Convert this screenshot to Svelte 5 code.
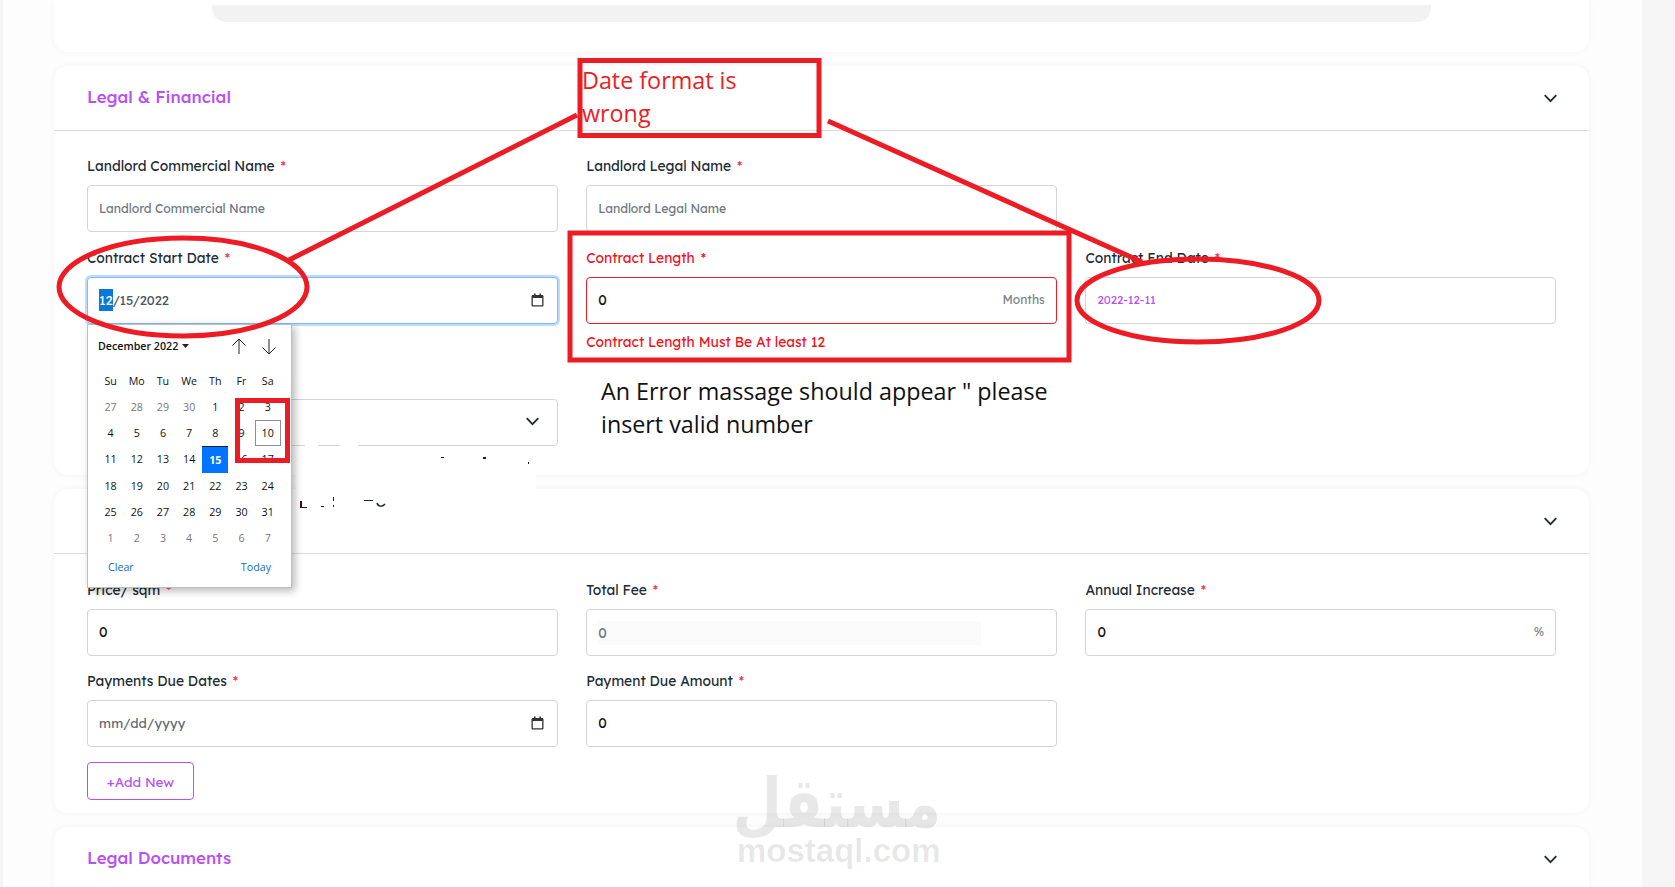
<script lang="ts">
	// Calendar grid for the open date picker (December 2022, Sunday first)
	const weekdays = ['Su', 'Mo', 'Tu', 'We', 'Th', 'Fr', 'Sa'];
	const days = [
		...[27, 28, 29, 30].map((d) => ({ d, muted: true })),
		...Array.from({ length: 31 }, (_, i) => ({ d: i + 1, muted: false })),
		...[1, 2, 3, 4, 5, 6, 7].map((d) => ({ d, muted: true }))
	];

	// Leftovers of the erased text in the reference
	const specks = [
		{ x: 441, y: 457, w: 3, h: 1 },
		{ x: 483, y: 457, w: 3, h: 2 },
		{ x: 528, y: 462, w: 1, h: 2 },
		{ x: 300, y: 501, w: 2, h: 7 },
		{ x: 300, y: 507, w: 7, h: 1 },
		{ x: 321, y: 506, w: 3, h: 1 },
		{ x: 333, y: 497, w: 1, h: 4 },
		{ x: 333, y: 505, w: 1, h: 2 },
		{ x: 364, y: 500, w: 9, h: 1 }
	];
	// Gaps the same paint left in the select's bottom border
	const gaps = [
		{ x: 305, w: 13 },
		{ x: 340, w: 18 }
	];
</script>

{#snippet chevron()}
	<svg class="chevron" width="13" height="9" viewBox="0 0 13 9"><path d="M.7 1.200 6.500 7.200 12.300 1.200" /></svg>
{/snippet}

{#snippet calIcon()}
	<svg class="cal-icon" width="13" height="14" viewBox="0 0 13 14">
		<path d="M3 0.5h1.6v1.5H8.4V0.5H10V2h1.2c.7 0 1.3.6 1.3 1.3v8.9c0 .7-.6 1.3-1.3 1.3H1.8c-.7 0-1.3-.6-1.3-1.3V3.3C.5 2.600 1.100 2 1.800 2H3Zm-1.200 4.600v7.100h9.400V5.100Z" />
	</svg>
{/snippet}

{#snippet req(text)}
	<label class="lbl">{text} <span class="star">*</span></label>
{/snippet}

<div class="page">
	<div class="gutter-l"></div>
	<main class="main">
		<section class="card stub"><div class="stub-bar"></div></section>

		<section class="card">
			<header class="card-head">
				<h2>Legal &amp; Financial</h2>
				{@render chevron()}
			</header>
			<div class="grid first">
				<div class="field">
					{@render req('Landlord Commercial Name')}
					<input class="inp" placeholder="Landlord Commercial Name" />
				</div>
				<div class="field">
					{@render req('Landlord Legal Name')}
					<input class="inp" placeholder="Landlord Legal Name" />
				</div>
				<div></div>

				<div class="field">
					{@render req('Contract Start Date')}
					<div class="inp date focus">
						<span><span class="sel">12</span>/15/2022</span>
						{@render calIcon()}
					</div>
				</div>
				<div class="field err">
					{@render req('Contract Length')}
					<div class="inp suffix">
						<span class="val">0</span>
						<span class="unit">Months</span>
					</div>
					<p class="err-msg">Contract Length Must Be At least 12</p>
				</div>
				<div class="field">
					{@render req('Contract End Date')}
					<div class="inp"><span class="purple">2022-12-11</span></div>
				</div>

				<div class="field">
					<label class="lbl">&nbsp;</label>
					<div class="inp suffix select">
						<span></span>
						{@render chevron()}
					</div>
				</div>
			</div>
		</section>

		<section class="card">
			<header class="card-head">
				<h2>&nbsp;</h2>
				{@render chevron()}
			</header>
			<div class="grid second">
				<div class="field">
					{@render req('Price/ sqm')}
					<div class="inp"><span class="val">0</span></div>
				</div>
				<div class="field">
					{@render req('Total Fee')}
					<div class="inp disabled"><span class="shade"><span class="val grey">0</span></span></div>
				</div>
				<div class="field">
					{@render req('Annual Increase')}
					<div class="inp suffix">
						<span class="val">0</span>
						<span class="unit">%</span>
					</div>
				</div>

				<div class="field">
					{@render req('Payments Due Dates')}
					<div class="inp date">
						<span class="ph">mm/dd/yyyy</span>
						{@render calIcon()}
					</div>
				</div>
				<div class="field">
					{@render req('Payment Due Amount')}
					<div class="inp"><span class="val">0</span></div>
				</div>
			</div>
			<button class="add">+Add New</button>
		</section>

		<section class="card last">
			<header class="card-head flat">
				<h2>Legal Documents</h2>
				{@render chevron()}
			</header>
		</section>
	</main>
	<div class="gutter-r"></div>

	<!-- white patch where the screenshot text was painted over -->
	<div class="patch"></div>
	{#each gaps as g}
		<i class="gap" style="left:{g.x}px;width:{g.w}px"></i>
	{/each}
	{#each specks as s}
		<i class="speck" style="left:{s.x}px;top:{s.y}px;width:{s.w}px;height:{s.h}px"></i>
	{/each}
	<svg class="smile" width="10" height="6" viewBox="0 0 10 6"><path d="M1 1c1 4 6 4 8 1" /></svg>

	<div class="picker">
		<div class="picker-top">
			<span class="month">December 2022 <svg width="7" height="4" viewBox="0 0 7 4"><path d="M0 0h7L3.500 4Z" /></svg></span>
			<span class="arrows">
				<svg width="16" height="17" viewBox="0 0 16 17"><path d="M8 16V1M1.500 7.500 8 1l6.500 6.500" /></svg>
				<svg width="16" height="17" viewBox="0 0 16 17"><path d="M8 1v15M1.500 9.500 8 16l6.500-6.500" /></svg>
			</span>
		</div>
		<div class="cal">
			{#each weekdays as w}
				<span class="wd">{w}</span>
			{/each}
			{#each days as day}
				<span
					class="day"
					class:muted={day.muted}
					class:picked={!day.muted && day.d === 15}
					class:today={!day.muted && day.d === 10}>{day.d}</span
				>
			{/each}
		</div>
		<div class="picker-foot">
			<span>Clear</span>
			<span>Today</span>
		</div>
	</div>

	<div class="mark">
		<div class="mark-ar" dir="rtl">مستقل</div>
		<div class="mark-en">mostaql.com</div>
	</div>

	<!-- review annotations drawn on top of the screenshot -->
	<svg class="notes" width="1675" height="887" viewBox="0 0 1675 887">
		<line x1="577" y1="115" x2="289" y2="260" />
		<line x1="828" y1="121" x2="1142" y2="262" />
		<rect x="580" y="60.500" width="239" height="75" />
		<rect x="570" y="233" width="499" height="127" />
		<rect x="237.500" y="400.500" width="50" height="60" />
		<ellipse cx="183" cy="287" rx="124" ry="49" />
		<ellipse cx="1198" cy="300.500" rx="121" ry="41.500" />
		<text class="t-red" x="582" y="89">Date format is</text>
		<text class="t-red" x="582" y="122">wrong</text>
		<text class="t-black" x="601" y="400">An Error massage should appear " please</text>
		<text class="t-black" x="601" y="433">insert valid number</text>
	</svg>
</div>

<style>
	:global(body) {
		margin: 0;
		background: #fff;
	}
	.page {
		position: relative;
		display: flex;
		width: 1675px;
		height: 887px;
		overflow: hidden;
		font-family: 'Lexend', 'Inter', 'Noto Sans', sans-serif;
		color: #212b36;
		background: #fff;
	}
	.gutter-l {
		width: 3px;
		background: #f5f5f5;
		flex: none;
	}
	.gutter-r {
		width: 34px;
		background: #f5f5f5;
		flex: none;
	}
	.main {
		flex: 1;
		padding: 0 53px 0 51px;
		display: flex;
		flex-direction: column;
		gap: 14px;
		background: #fdfdfd;
	}
	.card {
		flex: none;
		background: #fff;
		border-radius: 14px;
		box-shadow: 0 0 6px rgba(0, 0, 0, 0.05);
	}
	.stub {
		height: 52px;
		padding: 5px 158px 0;
		box-sizing: border-box;
		border-radius: 0 0 14px 14px;
	}
	.stub-bar {
		height: 17px;
		width: 1219px;
		background: #f2f2f2;
		border-radius: 0 0 14px 14px;
	}
	.card-head {
		height: 65px;
		box-sizing: border-box;
		padding: 0 32px 0 33px;
		display: flex;
		align-items: center;
		justify-content: space-between;
		border-bottom: 1px solid #dcdcdc;
		border-radius: 14px 14px 0 0;
	}
	.card-head.flat {
		border-bottom: 0;
	}
	h2 {
		margin: -4px 0 0;
		font-size: 16.800px;
		font-weight: 500;
		color: #b94ff7;
	}
	.chevron {
		fill: none;
		stroke: #212b36;
		stroke-width: 1.800;
	}
	.grid {
		display: grid;
		grid-template-columns: repeat(3, 470.700px);
		column-gap: 28.500px;
		row-gap: 17px;
		padding: 26px 33px 29px;
	}
	.grid.second {
		row-gap: 16px;
		padding: 27px 33px 15px;
	}
	.lbl {
		display: block;
		font-size: 13.800px;
		font-weight: 400;
		line-height: 19px;
		margin-top: -1px;
		margin-bottom: 10px;
		color: #212b36;
	}
	.star {
		color: #f5334f;
		margin-left: 2px;
	}
	.inp {
		display: flex;
		align-items: center;
		width: 100%;
		height: 47px;
		box-sizing: border-box;
		padding: 0 11px 2px;
		border: 1px solid #d3d5d9;
		border-radius: 4px;
		background: #fff;
		font-family: inherit;
		font-size: 13px;
		color: #212b36;
		outline: none;
	}
	.inp::placeholder {
		color: #6d7680;
		opacity: 1;
		font-size: 12.200px;
	}
	.date,
	.suffix {
		justify-content: space-between;
	}
	.date {
		padding-right: 13px;
	}
	.focus {
		border-color: #86b7fe;
		box-shadow: 0 0 0 2px #bcdcfb;
		color: #4a5560;
	}
	.sel {
		background: #0a78d7;
		color: #fff;
		display: inline-block;
		padding: 3px 0;
	}
	.ph {
		color: #5f6770;
		letter-spacing: 0.2px;
	}
	.cal-icon {
		fill: #333;
	}
	.val {
		font-size: 14px;
		color: #111;
	}
	.val.grey {
		color: #6d7680;
	}
	.unit {
		font-size: 12px;
		color: #7c8389;
	}
	.select {
		padding-right: 18px;
	}
	.purple {
		font-size: 11.500px;
		color: #b94ff7;
	}
	.disabled {
		padding: 0 11px;
	}
	.shade {
		display: flex;
		align-items: center;
		height: 24px;
		width: 383px;
		background: #fafafa;
	}
	.err .lbl,
	.err .star,
	.err-msg {
		color: #f21321;
	}
	.err .inp {
		border-color: #ee1c25;
	}
	.err-msg {
		margin: 0;
		height: 30px;
		line-height: 36px;
		font-size: 13.800px;
	}
	.add {
		display: block;
		margin: 0 0 13px 33px;
		width: 107px;
		height: 38px;
		padding: 0;
		background: #fff;
		border: 1px solid #b94ff7;
		border-radius: 4px;
		color: #b94ff7;
		font-family: inherit;
		font-size: 13.500px;
	}
	.last {
		height: 80px;
	}
	.patch {
		position: absolute;
		left: 296px;
		top: 447px;
		width: 240px;
		height: 46px;
		background: #fff;
	}
	.gap {
		position: absolute;
		top: 444px;
		height: 3px;
		background: #fff;
	}
	.speck {
		position: absolute;
		background: #2a1a1a;
	}
	.smile {
		position: absolute;
		left: 376px;
		top: 502px;
		fill: none;
		stroke: #1a2a3a;
		stroke-width: 1.500;
	}
	.picker {
		position: absolute;
		left: 87px;
		top: 324px;
		width: 205px;
		height: 264px;
		box-sizing: border-box;
		background: #fff;
		border: 1px solid #bfbfbf;
		box-shadow: 3px 3px 8px rgba(0, 0, 0, 0.28);
		font-family: 'Open Sans', 'Noto Sans', sans-serif;
		font-size: 10.700px;
		color: #111;
	}
	.picker-top {
		display: flex;
		justify-content: space-between;
		align-items: center;
		height: 43px;
		padding: 0 14px 0 10px;
	}
	.month {
		font-weight: 600;
		display: flex;
		align-items: center;
		gap: 4px;
		margin-top: -2px;
	}
	.month svg {
		fill: #222;
	}
	.arrows {
		display: flex;
		gap: 14px;
		margin-top: -1px;
	}
	.arrows svg {
		fill: none;
		stroke: #222;
		stroke-width: 1;
	}
	.cal {
		display: grid;
		grid-template-columns: repeat(7, 26.200px);
		grid-auto-rows: 26.150px;
		padding: 0 0 0 9.500px;
	}
	.wd,
	.day {
		display: flex;
		align-items: center;
		justify-content: center;
		box-sizing: border-box;
	}
	.day.muted {
		color: #777;
	}
	.picked {
		background: #0075ff;
		border-top: 1px solid #123;
		color: #fff;
		font-weight: 700;
	}
	.today {
		border: 1px solid #8f8f8f;
	}
	.picker-foot {
		display: flex;
		justify-content: space-between;
		padding: 9px 20px 0 20px;
		color: #0a6fc9;
	}
	.mark {
		position: absolute;
		left: 737px;
		top: 772px;
		width: 201px;
		color: rgba(0, 0, 0, 0.09);
		text-align: center;
		pointer-events: none;
	}
	.mark-ar {
		font-family: 'DejaVu Sans', sans-serif;
		font-weight: 700;
		font-size: 74px;
		line-height: 62px;
		width: 261px;
		margin-left: -27px;
		white-space: nowrap;
		transform: scale(0.77, 0.93);
	}
	.mark-en {
		font-family: 'Liberation Sans', sans-serif;
		font-weight: 700;
		font-size: 33px;
		line-height: 34px;
	}
	.notes {
		position: absolute;
		left: 0;
		top: 0;
		pointer-events: none;
	}
	.notes line,
	.notes rect,
	.notes ellipse {
		fill: none;
		stroke: #ed1c24;
		stroke-width: 5;
	}
	.t-red,
	.t-black {
		font-family: 'Open Sans', 'Noto Sans', sans-serif;
		font-size: 23.300px;
		stroke: none;
	}
	.t-red {
		fill: #ed1c24;
	}
	.t-black {
		fill: #111;
	}
</style>
